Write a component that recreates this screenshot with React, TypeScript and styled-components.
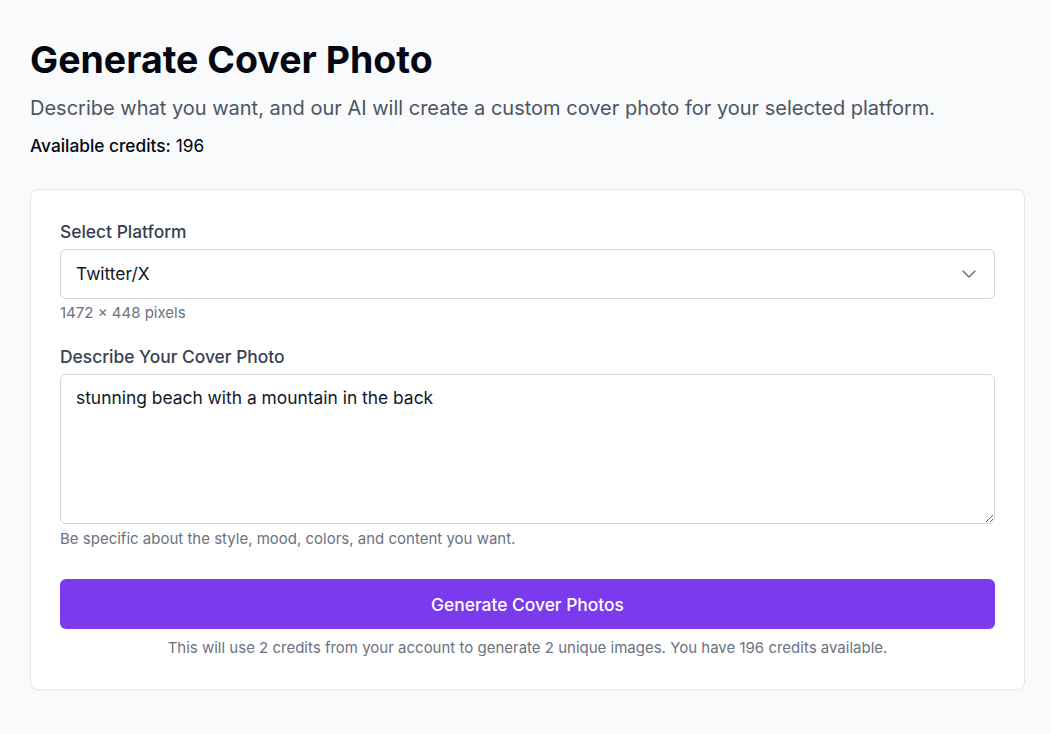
import React, { useState } from 'react';
import styled, { createGlobalStyle } from 'styled-components';

const GlobalStyle = createGlobalStyle`
  * {
    box-sizing: border-box;
  }

  body {
    margin: 0;
    background: #f9fafb;
    font-family: Inter, "Noto Sans", "Liberation Sans", sans-serif;
    color: #111827;
  }
`;

const Page = styled.main`
  padding: 40px 26px 40px 30px;
`;

const Header = styled.header`
  margin-bottom: 31px;
`;

const Title = styled.h1`
  margin: 0 0 14px;
  font-size: 37.5px;
  line-height: 40px;
  font-weight: 700;
  color: #030712;
`;

const Subtitle = styled.p`
  margin: 0 0 12px;
  font-size: 20px;
  line-height: 28px;
  color: #4b5563;
`;

const Credits = styled.p`
  margin: 0;
  font-size: 17.3px;
  line-height: 24px;
  color: #030712;

  strong {
    font-weight: 500;
  }
`;

const Card = styled.section`
  background: #ffffff;
  border: 1px solid #e5e7eb;
  border-radius: 8px;
  box-shadow: 0 1px 2px rgba(0, 0, 0, 0.04);
  padding: 30px 29px 31px;
`;

const Field = styled.div<{ $gap: number }>`
  display: flex;
  flex-direction: column;
  margin-bottom: ${({ $gap }) => $gap}px;
`;

const Label = styled.label`
  font-size: 17.4px;
  line-height: 24px;
  font-weight: 500;
  color: #374151;
  margin-bottom: 5px;
`;

const SelectBox = styled.button`
  display: flex;
  align-items: center;
  justify-content: space-between;
  height: 50px;
  width: 100%;
  padding: 0 13px 0 15px;
  background: #ffffff;
  border: 1px solid #d1d5db;
  border-radius: 6px;
  font-family: inherit;
  font-size: 17.4px;
  line-height: 24px;
  color: #111827;
  text-align: left;
  cursor: pointer;
`;

const TextArea = styled.textarea`
  display: block;
  width: 100%;
  height: 150px;
  padding: 11px 15px;
  border: 1px solid #d1d5db;
  border-radius: 6px;
  font-family: inherit;
  font-size: 17.4px;
  line-height: 24px;
  color: #111827;
  resize: vertical;
  outline: none;
`;

const Hint = styled.p<{ $top: number }>`
  margin: ${({ $top }) => $top}px 0 0;
  font-size: 15px;
  line-height: 20px;
  color: #6b7280;
`;

const SubmitButton = styled.button`
  display: block;
  width: 100%;
  height: 50px;
  border: none;
  border-radius: 6px;
  background: #7c3aed;
  color: #ffffff;
  font-family: inherit;
  font-size: 17.4px;
  font-weight: 500;
  cursor: pointer;

  &:hover {
    background: #6d28d9;
  }
`;

const Note = styled.p`
  margin: 9px 0 0;
  font-size: 15px;
  line-height: 20px;
  color: #6b7280;
  text-align: center;
`;

const Chevron = () => (
  <svg width="24" height="24" viewBox="0 0 24 24" fill="none" stroke="#6b7280" strokeWidth="1.5" strokeLinecap="round" strokeLinejoin="round">
    <path d="m6 9 6 6 6-6" />
  </svg>
);

const App: React.FC = () => {
  const [prompt, setPrompt] = useState('stunning beach with a mountain in the back');
  const credits = 196;

  return (
    <>
      <GlobalStyle />
      <Page>
        <Header>
          <Title>Generate Cover Photo</Title>
          <Subtitle>
            Describe what you want, and our AI will create a custom cover photo for your selected platform.
          </Subtitle>
          <Credits>
            <strong>Available credits:</strong> {credits}
          </Credits>
        </Header>

        <Card>
          <Field $gap={22}>
            <Label>Select Platform</Label>
            <SelectBox type="button">
              <span>Twitter/X</span>
              <Chevron />
            </SelectBox>
            <Hint $top={4}>1472 × 448 pixels</Hint>
          </Field>

          <Field $gap={30}>
            <Label htmlFor="prompt">Describe Your Cover Photo</Label>
            <TextArea id="prompt" value={prompt} onChange={(e) => setPrompt(e.target.value)} />
            <Hint $top={5}>Be specific about the style, mood, colors, and content you want.</Hint>
          </Field>

          <SubmitButton type="button">Generate Cover Photos</SubmitButton>
          <Note>
            This will use 2 credits from your account to generate 2 unique images. You have {credits} credits available.
          </Note>
        </Card>
      </Page>
    </>
  );
};

export default App;
